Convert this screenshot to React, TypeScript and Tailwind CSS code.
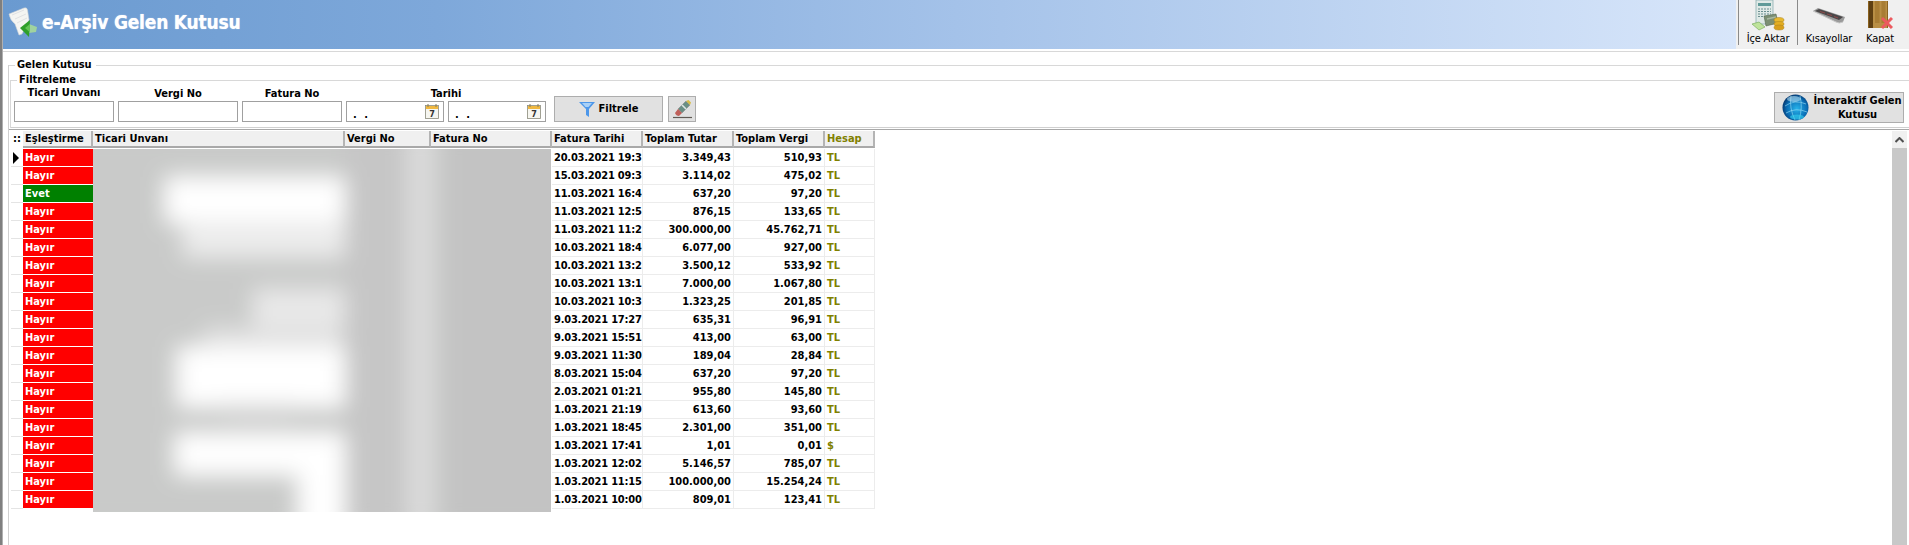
import React from "react";

const rows: [string, string, string, string, string][] = [
  ["Hayır", "20.03.2021 19:3", "3.349,43", "510,93", "TL"],
  ["Hayır", "15.03.2021 09:3", "3.114,02", "475,02", "TL"],
  ["Evet", "11.03.2021 16:4", "637,20", "97,20", "TL"],
  ["Hayır", "11.03.2021 12:5", "876,15", "133,65", "TL"],
  ["Hayır", "11.03.2021 11:2", "300.000,00", "45.762,71", "TL"],
  ["Hayır", "10.03.2021 18:4", "6.077,00", "927,00", "TL"],
  ["Hayır", "10.03.2021 13:2", "3.500,12", "533,92", "TL"],
  ["Hayır", "10.03.2021 13:1", "7.000,00", "1.067,80", "TL"],
  ["Hayır", "10.03.2021 10:3", "1.323,25", "201,85", "TL"],
  ["Hayır", "9.03.2021 17:27", "635,31", "96,91", "TL"],
  ["Hayır", "9.03.2021 15:51", "413,00", "63,00", "TL"],
  ["Hayır", "9.03.2021 11:30", "189,04", "28,84", "TL"],
  ["Hayır", "8.03.2021 15:04", "637,20", "97,20", "TL"],
  ["Hayır", "2.03.2021 01:21", "955,80", "145,80", "TL"],
  ["Hayır", "1.03.2021 21:19", "613,60", "93,60", "TL"],
  ["Hayır", "1.03.2021 18:45", "2.301,00", "351,00", "TL"],
  ["Hayır", "1.03.2021 17:41", "1,01", "0,01", "$"],
  ["Hayır", "1.03.2021 12:02", "5.146,57", "785,07", "TL"],
  ["Hayır", "1.03.2021 11:15", "100.000,00", "15.254,24", "TL"],
  ["Hayır", "1.03.2021 10:00", "809,01", "123,41", "TL"],
];

const cols = "grid grid-cols-[12px_70px_252px_86px_121px_91px_91px_91px_50px] w-[864px]";

function DocIcon() {
  return (
    <svg width="30" height="32" viewBox="0 0 30 32" className="shrink-0">
      <path d="M1 7 L16 1 Q19 0 19.5 3 L21 13 L14 27 L11 28 L7 17 Q2 13 1 7Z" fill="#f4f5f2" stroke="#cfd3d6" strokeWidth="0.6" />
      <path d="M4 8 L16 3 M7 12 L18 7 M9 16 L19 11" stroke="#d9dcde" strokeWidth="0.8" />
      <path d="M21 17 L29 20 L28 25 L21 26Z" fill="#a9dd96" opacity="0.85" />
      <path d="M12 21 L22 13 L21 30Z" fill="#2f9f2a" />
      <path d="M17 21 L22 17 L21.5 25Z" fill="#63c455" />
    </svg>
  );
}

function ImportIcon() {
  return (
    <svg width="34" height="31" viewBox="0 0 34 31">
      <rect x="5" y="0" width="17" height="24" fill="#dfe9e6" stroke="#7fa6a8" strokeWidth="0.7" />
      <rect x="7" y="3" width="13" height="3" fill="#5f9a98" />
      <path d="M7 9h13M7 11.5h13M7 14h13M7 16.5h13" stroke="#6b8f90" strokeWidth="1.2" strokeDasharray="2 1" />
      <path d="M1 24 L8 22 L14 27 L8 30Z" fill="#bfe39b" stroke="#6fa553" strokeWidth="0.6" />
      <path d="M13 16 L25 14 L27 23 L15 26Z" fill="#7b8f73" stroke="#55674f" strokeWidth="0.6" />
      <path d="M16 19 L25 17" stroke="#a9b8a1" strokeWidth="1.5" />
      <ellipse cx="28" cy="20" rx="5" ry="2.5" fill="#e8b92f" stroke="#a9801b" strokeWidth="0.5" />
      <ellipse cx="28" cy="24" rx="5" ry="2.5" fill="#e4ae22" stroke="#a9801b" strokeWidth="0.5" />
      <ellipse cx="28" cy="27.5" rx="5" ry="2.5" fill="#d99f1b" stroke="#a9801b" strokeWidth="0.5" />
    </svg>
  );
}

function KeyboardIcon() {
  return (
    <svg width="34" height="18" viewBox="0 0 34 18">
      <path d="M1 4 L6 1 L33 10 L31 15 Q27 17 24 15Z" fill="#9a9a9a" />
      <path d="M3 4 L7 2 L31 10 L27 13Z" fill="#4a4748" />
      <path d="M8 4.5 L13 6 M15 7 L20 8.5 M22 9.5 L26 11" stroke="#8a4a4a" strokeWidth="1.2" />
      <path d="M1 4 L24 15 Q27 17 31 15" fill="none" stroke="#c8c8c8" strokeWidth="1" />
    </svg>
  );
}

function DoorIcon() {
  return (
    <svg width="26" height="29" viewBox="0 0 26 29">
      <rect x="1" y="0" width="20" height="27" fill="#8a6220" />
      <rect x="2" y="0" width="4" height="27" fill="#5f4012" />
      <rect x="6" y="0" width="14" height="27" fill="#b98f45" />
      <rect x="8" y="0" width="4.5" height="22" fill="#a87d34" />
      <rect x="14.5" y="0" width="4" height="22" fill="#a87d34" />
      <path d="M15 17 L25 27 M25 17 L15 27" stroke="#ec5a5f" strokeWidth="3" />
    </svg>
  );
}

function Funnel() {
  return (
    <svg width="16" height="16" viewBox="0 0 16 16">
      <path d="M0 1 H16 L10 8 V16 L7 14 V8Z" fill="#4d97ea" />
      <path d="M3 2 H13 L9.5 6 H6.5Z" fill="#a8d0f7" />
    </svg>
  );
}

function EraserIcon() {
  return (
    <svg width="19" height="19" viewBox="0 0 19 19">
      <path d="M5 9 L13 1 L17 5 L9 13Z" fill="#6b8f84" stroke="#8a8a8a" strokeWidth="0.6" />
      <path d="M13 1 L15.5 0 L18 2.5 L17 5Z" fill="#d9bd45" />
      <path d="M9 5 L13 9" stroke="#dfe7e4" strokeWidth="1.6" />
      <path d="M2 13 L5 9 L9 13 L6 16Q3 16 2 13Z" fill="#c0605a" />
      <path d="M0 17.5 H19" stroke="#5f5a54" strokeWidth="1.2" />
    </svg>
  );
}

function CalendarIcon() {
  return (
    <svg width="14" height="15" viewBox="0 0 14 15" className="shrink-0">
      <rect x="0.5" y="1.5" width="13" height="13" fill="#f6f6f0" stroke="#8b8b7a" strokeWidth="0.8" />
      <rect x="1" y="2" width="12" height="3" fill="#f0b840" />
      <path d="M3 0v3M11 0v3" stroke="#8b7a50" strokeWidth="1" />
      <text x="7" y="13" textAnchor="middle" fontSize="9" fontWeight="700" fill="#333">7</text>
    </svg>
  );
}

function GlobeIcon() {
  return (
    <svg width="27" height="27" viewBox="0 0 27 27" className="shrink-0">
      <defs>
        <radialGradient id="g1" cx="0.55" cy="0.55" r="0.6">
          <stop offset="0" stopColor="#27b3ea" />
          <stop offset="0.65" stopColor="#0a6db5" />
          <stop offset="1" stopColor="#062f63" />
        </radialGradient>
      </defs>
      <circle cx="13.5" cy="13.5" r="13" fill="url(#g1)" />
      <path d="M3 12 Q13 5 24 10 M4 19 Q14 13 25 18 M9 2 Q7 14 13 26 M18 2 Q21 13 17 26" fill="none" stroke="#9ce0f7" strokeWidth="0.6" />
      <ellipse cx="12" cy="5" rx="7" ry="3" fill="#c6ecfa" opacity="0.55" />
      <ellipse cx="15" cy="23" rx="7" ry="2.5" fill="#36d3f2" opacity="0.6" />
    </svg>
  );
}

function Legend({ text, lead }: { text: string; lead: string }) {
  return (
    <div className="flex items-center h-[14px]">
      <div className={`h-px bg-[#d8d8d8] ${lead}`} />
      <span className="px-[2px] font-bold text-[11px] leading-[14px] text-black">{text}</span>
      <div className="h-px bg-[#d8d8d8] flex-1 ml-[2px]" />
    </div>
  );
}

function Field({ label, width, up }: { label: string; width: string; up?: boolean }) {
  return (
    <div className={`flex flex-col items-center ${width}`}>
      <span className={`font-bold text-[11px] leading-[14px] whitespace-nowrap ${up ? "mb-px" : ""}`}>{label}</span>
      <div className="w-full h-[21px] border border-[#a0a0a0] bg-white" />
    </div>
  );
}

function DateInput({ width }: { width: string }) {
  return (
    <div className={`h-[21px] border border-[#a0a0a0] bg-white flex items-center justify-between pl-[6px] pr-[4px] ${width}`}>
      <span className="font-bold text-[11px] leading-none pt-[5px] tracking-[2px]">. .</span>
      <CalendarIcon />
    </div>
  );
}

function HeadCell({ children, olive }: { children: React.ReactNode; olive?: boolean }) {
  return (
    <div
      className={`h-[17px] bg-[#f0f0f0] border-b-2 border-r-2 border-b-[#a9a9a9] border-r-[#b4b4b4] pl-[2px] font-bold text-[11px] leading-[15px] whitespace-nowrap overflow-hidden ${olive ? "text-[#808000]" : "text-black"}`}
    >
      {children}
    </div>
  );
}

function Tool({ label, width, sep, children }: { label: string; width: string; sep?: boolean; children: React.ReactNode }) {
  return (
    <div className={`h-[45px] flex flex-col items-center justify-between ${width} ${sep ? "border-l border-[#8a8a8a]" : ""}`}>
      <div className="h-[31px] flex items-center justify-center overflow-hidden">{children}</div>
      <span className="text-[11px] leading-[13px] tracking-[-0.15px] text-black whitespace-nowrap">{label}</span>
    </div>
  );
}

export default function App() {
  return (
    <div className="w-[1909px] h-[545px] overflow-hidden bg-white flex font-['DejaVu_Sans_Condensed','DejaVu_Sans',sans-serif] text-black">
      <div className="w-[3px] shrink-0 bg-[#7f7f7f] border-r border-[#b0b0b0]" />
      <div className="flex-1 min-w-0 flex flex-col">
        <header className="h-[49px] shrink-0 flex">
          <div className="flex-1 flex items-start pl-[5px] pt-[7px] gap-[4px] bg-[linear-gradient(90deg,#6a9ad0_0%,#7ea8da_25%,#a4c2e9_55%,#d8e6fa_100%)]">
            <DocIcon />
            <h1 className="text-[19px] leading-[31px] tracking-[-0.2px] font-bold text-white [text-shadow:0_0_1px_#dce8f8]">e-Arşiv Gelen Kutusu</h1>
          </div>
          <div className="w-[173px] shrink-0 bg-[#f0f0f0] flex pl-[2px]">
            <Tool label="İçe Aktar" width="w-[59px]" sep><ImportIcon /></Tool>
            <Tool label="Kısayollar" width="w-[63px]" sep><KeyboardIcon /></Tool>
            <Tool label="Kapat" width="w-[40px]"><DoorIcon /></Tool>
          </div>
        </header>
        <div className="h-px mt-[2px] bg-[#d8d8d8] shrink-0" />
        <div className="ml-[5px] mt-[6px] flex-1 min-h-0 relative">
          <Legend text="Gelen Kutusu" lead="w-[7px]" />
          <div className="absolute left-0 top-[7px] bottom-0 w-px bg-[#d0d0d0]" />
          <div className="pl-[1px] flex flex-col">
            <div className="relative mt-px">
              <div className="absolute left-px top-[7px] bottom-0 w-px bg-[#d8d8d8]" />
              <div className="pl-px">
                <Legend text="Filtreleme" lead="w-[7px]" />
              </div>
              <div className="h-[37px] flex items-end pb-[2px] pl-[5px] pr-[5px]">
                <div className="flex items-end gap-[4px]">
                  <Field label="Ticari Unvanı" width="w-[100px]" up />
                  <Field label="Vergi No" width="w-[120px]" />
                  <Field label="Fatura No" width="w-[100px]" />
                  <div className="flex flex-col items-center">
                    <span className="font-bold text-[11px] leading-[14px]">Tarihi</span>
                    <div className="flex gap-[4px]">
                      <DateInput width="w-[98px]" />
                      <DateInput width="w-[98px]" />
                    </div>
                  </div>
                </div>
                <button className="ml-[8px] w-[109px] h-[26px] bg-[#e1e1e1] border border-[#adadad] flex items-center justify-center gap-[4px] text-[11px] font-bold">
                  <Funnel />
                  <span>Filtrele</span>
                </button>
                <button className="ml-[5px] w-[28px] h-[26px] bg-[#e1e1e1] border border-[#adadad] flex items-center justify-center">
                  <EraserIcon />
                </button>
                <button className="ml-auto -mb-px w-[130px] h-[31px] bg-[#e1e1e1] border border-[#adadad] flex items-center pl-[7px] gap-[3px]">
                  <GlobeIcon />
                  <span className="flex-1 text-center text-[11px] leading-[14px] font-bold">İnteraktif Gelen<br />Kutusu</span>
                </button>
              </div>
              <div className="ml-px mt-[3px] h-px bg-[#d0d0d0]" />
            </div>
            <div className="mt-px h-px bg-[#a8a8a8]" />
            <div className="mt-px pl-[2px] flex justify-between relative">
              <div className="relative">
                <div className={cols}>
                  <div className="h-[17px] flex items-center justify-center font-bold text-[11px] leading-none pb-[2px]">::</div>
                  <HeadCell>Eşleştirme</HeadCell>
                  <HeadCell>Ticari Unvanı</HeadCell>
                  <HeadCell>Vergi No</HeadCell>
                  <HeadCell>Fatura No</HeadCell>
                  <HeadCell>Fatura Tarihi</HeadCell>
                  <HeadCell>Toplam Tutar</HeadCell>
                  <HeadCell>Toplam Vergi</HeadCell>
                  <HeadCell olive>Hesap</HeadCell>
                </div>
                <div className="mt-px">
                  {rows.map((r, i) => (
                    <div key={i} className={cols}>
                      <div className="h-[18px] border-b border-[#e4e4e4] flex items-center pl-[2px]">
                        {i === 0 && <div className="w-0 h-0 border-y-[6px] border-y-transparent border-l-[6px] border-l-black" />}
                      </div>
                      <div className={`h-[18px] border-b border-white pl-[2px] text-white font-bold text-[11px] leading-[17px] ${r[0] === "Evet" ? "bg-[#008000]" : "bg-[#ff0000]"}`}>{r[0]}</div>
                      <div className="h-[18px]" />
                      <div className="h-[18px]" />
                      <div className="h-[18px]" />
                      <div className="h-[18px] border-b border-r border-[#ececec] pl-[2px] font-bold text-[11px] leading-[17px] tracking-[-0.2px] whitespace-nowrap overflow-hidden">{r[1]}</div>
                      <div className="h-[18px] border-b border-r border-[#ececec] pr-[2px] text-right font-bold text-[11px] leading-[17px]">{r[2]}</div>
                      <div className="h-[18px] border-b border-r border-[#ececec] pr-[2px] text-right font-bold text-[11px] leading-[17px]">{r[3]}</div>
                      <div className="h-[18px] border-b border-r border-[#ececec] pl-[2px] font-bold text-[11px] leading-[17px] text-[#808000]">{r[4]}</div>
                    </div>
                  ))}
                </div>
                <svg width="458" height="363" viewBox="0 0 458 363" className="absolute left-[82px] top-[18px]">
                  <defs>
                    <filter id="b" x="-20%" y="-20%" width="140%" height="140%">
                      <feGaussianBlur stdDeviation="11" />
                    </filter>
                    <clipPath id="c"><rect width="458" height="363" /></clipPath>
                  </defs>
                  <rect width="458" height="363" fill="#c9cac9" />
                  <g clipPath="url(#c)">
                    <g filter="url(#b)">
                      <rect x="-20" y="-20" width="500" height="400" fill="#c9cac9" />
                      <rect x="352" y="-20" width="140" height="400" fill="#c3c3c3" />
                      <rect x="252" y="-20" width="62" height="400" fill="#c6c6c6" />
                      <rect x="314" y="-20" width="26" height="400" fill="#dcdcdc" />
                      <rect x="72" y="28" width="180" height="46" fill="#ffffff" />
                      <rect x="190" y="50" width="62" height="44" fill="#ffffff" />
                      <rect x="90" y="72" width="162" height="36" fill="#ececec" />
                      <rect x="160" y="140" width="92" height="38" fill="#e8e8e8" />
                      <rect x="110" y="178" width="140" height="22" fill="#e0e0e0" />
                      <rect x="84" y="198" width="168" height="60" fill="#ffffff" />
                      <rect x="82" y="284" width="170" height="42" fill="#ffffff" />
                      <rect x="205" y="320" width="47" height="70" fill="#ffffff" />
                      <rect x="130" y="255" width="70" height="16" fill="#d6d6d6" />
                    </g>
                  </g>
                </svg>
              </div>
              <div className="w-[15px] mr-[2px] h-[414px] shrink-0 flex flex-col">
                <div className="h-[17px] bg-[#f0f0f0] flex items-center justify-center shrink-0">
                  <svg width="9" height="6" viewBox="0 0 9 6"><path d="M0.5 5 L4.5 1 L8.5 5" fill="none" stroke="#505050" strokeWidth="2" /></svg>
                </div>
                <div className="flex-1 bg-[#c8c8c8]" />
              </div>
            </div>
          </div>
        </div>
      </div>
    </div>
  );
}
